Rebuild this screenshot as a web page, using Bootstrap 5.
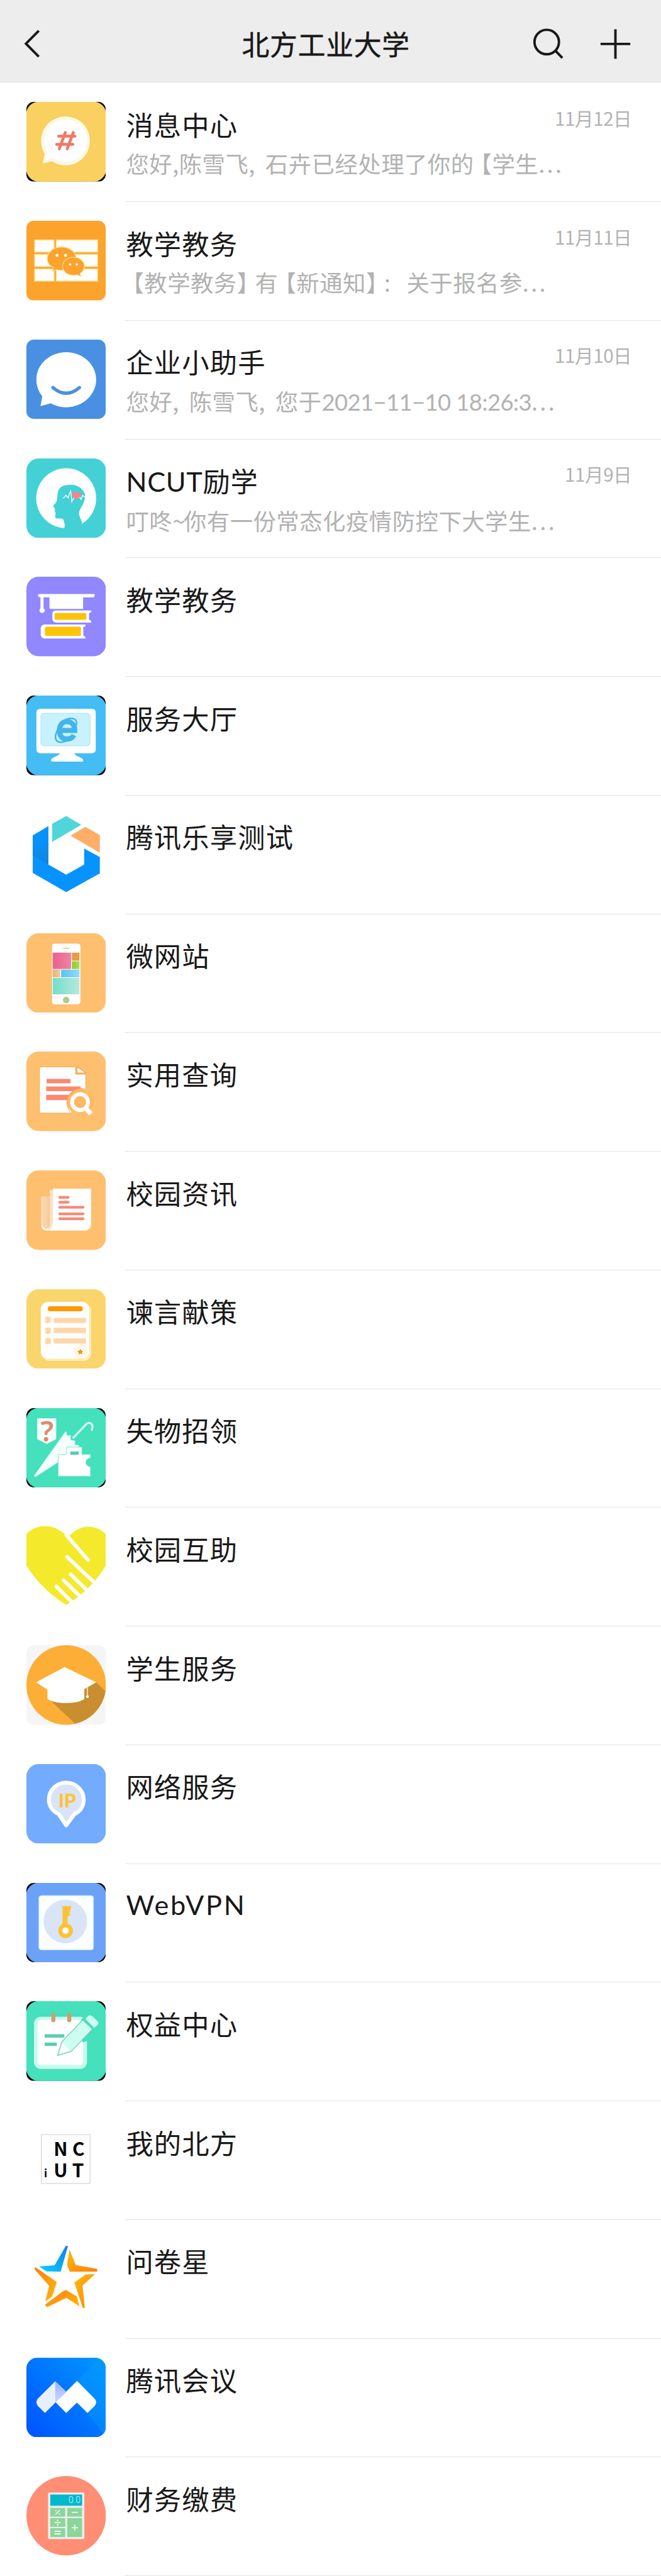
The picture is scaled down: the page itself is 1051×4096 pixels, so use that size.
<!DOCTYPE html>
<html lang="zh-CN">
<head>
<meta charset="utf-8">
<meta name="viewport" content="width=device-width, initial-scale=1">
<title>北方工业大学</title>
<link rel="stylesheet" href="https://cdn.jsdelivr.net/npm/bootstrap@5.3.0/dist/css/bootstrap.min.css">
<style>
:root{--u:.973px}
html,body{overflow:hidden}
body{font-family:"Noto Sans CJK SC","Noto Sans",sans-serif;background:#fff;color:#191919}
.topbar{height:calc(136*var(--u));background:#ededed;padding:calc(7*var(--u)) calc(47*var(--u)) 0 calc(34*var(--u))}
.topbar-side{flex:1 1 0}
.topbar-title{font-size:calc(45*var(--u));letter-spacing:calc(.8*var(--u));line-height:1;-webkit-text-stroke:.5px #191919;margin-right:calc(12*var(--u));position:relative;left:calc(5*var(--u))}
.ico{display:block;flex:none;width:calc(56*var(--u));height:calc(56*var(--u));fill:none;stroke:#191919;stroke-width:4}
.ico-find{margin-right:calc(54*var(--u))}
.entry{height:calc(194*var(--u));padding-left:calc(43*var(--u))}
.tile{display:block;flex:none;width:calc(130*var(--u));height:calc(130*var(--u));margin-top:calc(31*var(--u));margin-right:calc(32*var(--u));border-radius:calc(12*var(--u));overflow:hidden}
.entry-body{border-bottom:1px solid #e3e3e3;padding:calc(33.500*var(--u)) calc(48*var(--u)) 0 calc(1*var(--u))}
.entry-name{font-size:calc(44.5*var(--u));letter-spacing:calc(1.2*var(--u));line-height:calc(66*var(--u))}
.latin{font-family:Lato,"Noto Sans CJK SC",sans-serif}
.name-wide{letter-spacing:calc(2.800*var(--u))}
.name-tight{letter-spacing:calc(.700*var(--u))}
.stamp{letter-spacing:calc(-.600*var(--u))}
.gap-s{margin-right:.2em}.gap-l{margin-right:.45em}
.tilde{margin-right:-.08em}
.entry-date{font-size:calc(30.500*var(--u));line-height:calc(44*var(--u));margin-top:calc(2*var(--u));color:#b2b2b2;letter-spacing:calc(-.500*var(--u))}
.entry-note{font-size:calc(37.4*var(--u));line-height:calc(56*var(--u));margin-top:calc(3*var(--u));color:#b2b2b2;letter-spacing:calc(.5*var(--u));white-space:pre}
.br-l{margin-left:-.22em}.br-r{margin-right:-.22em}
.dots{letter-spacing:.09em}
</style>
<script src="https://cdn.jsdelivr.net/npm/bootstrap@5.3.0/dist/js/bootstrap.bundle.min.js"></script>
</head>
<body>
<header class="topbar d-flex align-items-center">
  <div class="topbar-side">
    <svg class="ico" viewBox="34 43 56 56"><path d="M63.5 50 42.5 71.2 63.5 92.5"/></svg>
  </div>
  <div class="topbar-title">北方工业大学</div>
  <div class="topbar-side d-flex justify-content-end">
    <svg class="ico ico-find" viewBox="867 43 56 56"><circle cx="893" cy="68.5" r="20"/><path d="M907 82.5 918.5 94.5"/></svg>
    <svg class="ico" viewBox="977 43 56 56"><path d="M981 71.7h48.6M1005.3 47.5v48.4"/></svg>
  </div>
</header>
<main>
  <div class="entry d-flex">
    <svg class="tile" viewBox="69 81 390 390"><path fill="#000" d="M69 81h390v390H69z"/><rect x="68" y="80" width="392" height="392" rx="62" fill="#fad160"/>
      <path d="M261 151c68 0 121 54 121 121s-54 122-121 122c-26 0-47-8-66-20l-49 12 11-50c-12-20-18-40-18-64 0-67 54-121 122-121z" fill="#fffbe0" stroke="#e9b94a" stroke-width="2"/>
      <path d="M262 165c60 0 107 48 107 107s-47 107-107 107c-24 0-45-8-62-20l-40 12 9-42c-9-17-14-36-14-57 0-59 47-107 107-107z" fill="#fff" stroke="#f7edc8" stroke-width="2"/>
      <path d="M260 231l-30 80M299 231l-30 80M227 249h80M217 289h80" stroke="#f27865" stroke-width="14" stroke-linecap="round"/></svg>
    <div class="entry-body flex-grow-1">
      <div class="d-flex justify-content-between"><div class="entry-name">消息中心</div><div class="entry-date">11月12日</div></div>
      <div class="entry-note">您好,陈雪飞<span class="gap-s">,</span> 石卉已经处理了你的<span class="br-l">【</span>学生<span class="dots">...</span></div>
    </div>
  </div>
  <div class="entry d-flex">
    <svg class="tile" viewBox="69 663 390 390"><path fill="#fba32d" d="M69 663h390v390H69z"/>
      <path fill="#fff" stroke="#ffdc84" stroke-width="4" d="M109 757h96v60h-96zM215 757h203v60H215zM109 828h96v60h-96zM215 828h203v60H215zM109 899h96v60h-96zM215 899h203v60H215z"/>
      <path fill="#fba32d" stroke="#ffd98a" stroke-width="4" d="M242 792c40 0 71 26 71 57s-31 57-71 57c-9 0-17-1-25-4l-20 10 5-18c-19-10-31-26-31-45 0-31 31-57 71-57z"/>
      <path fill="#fba32d" stroke="#ffd98a" stroke-width="4" d="M300 842c31 0 53 20 53 44 0 14-8 27-21 35l3 14-17-7c-6 2-12 2-18 2-30 0-54-20-54-44s24-44 54-44z"/>
      <g fill="#fff"><circle cx="219" cy="833" r="7"/><circle cx="261" cy="833" r="7"/><circle cx="283" cy="877" r="6"/><circle cx="316" cy="877" r="6"/></g></svg>
    <div class="entry-body flex-grow-1">
      <div class="d-flex justify-content-between"><div class="entry-name">教学教务</div><div class="entry-date">11月11日</div></div>
      <div class="entry-note"><span class="br-l">【</span>教学教务<span class="br-r">】</span>有<span class="br-l">【</span>新通知<span class="br-r">】</span><span class="gap-l">:</span> 关于报名参<span class="dots">...</span></div>
    </div>
  </div>
  <div class="entry d-flex">
    <svg class="tile" viewBox="69 75 390 390"><path fill="#4a90e2" d="M69 75h390v390H69z"/>
      <path fill="#fff" d="M264 137c81 0 147 60 147 134s-66 136-147 136c-27 0-53-8-75-20l-51 14 9-48c-18-22-29-50-29-82 0-74 65-134 146-134z"/>
      <path d="M199 310q65 56 130 0" fill="none" stroke="#4a90e2" stroke-width="16" stroke-linecap="round"/></svg>
    <div class="entry-body flex-grow-1">
      <div class="d-flex justify-content-between"><div class="entry-name">企业小助手</div><div class="entry-date">11月10日</div></div>
      <div class="entry-note">您好<span class="gap-s">,</span> 陈雪飞<span class="gap-s">,</span> 您于<span class="latin stamp">2021−11−10 18:26:3</span><span class="dots">...</span></div>
    </div>
  </div>
  <div class="entry d-flex">
    <svg class="tile" viewBox="69 657 390 390"><rect x="69" y="657" width="390" height="390" rx="60" fill="#43d1d6"/>
      <circle cx="264" cy="852" r="147" fill="#fff"/>
      <path fill="#43d1d6" d="M221 838c2-28 14-44 36-49 52-12 84 8 98 40 8 40-21 66-28 92-1 7 0 13 3 20l13 33-42 40-48-10c7-14 3-34-5-50-9-5-28 1-36-6-5-8 1-18 0-26-6-4-3-7-3-13l-2-11c-8-2-9-7-2-14 9-10 14-18 14-28 0-6 1-12 2-18z"/>
      <path d="M250 852l13-15 10 14 13-38 5 56 11-20 28-3 7 12 8-20 12 10" fill="none" stroke="#fff" stroke-width="4"/>
      <path fill="#fb8287" d="M295 823h15l5 5 5-5h16v18l-22 19-21-19z"/></svg>
    <div class="entry-body flex-grow-1">
      <div class="d-flex justify-content-between"><div class="entry-name name-tight"><span class="latin">NCUT</span>励学</div><div class="entry-date">11月9日</div></div>
      <div class="entry-note">叮咚<span class="tilde">~</span>你有一份常态化疫情防控下大学生<span class="dots">...</span></div>
    </div>
  </div>
  <div class="entry d-flex">
    <svg class="tile" viewBox="69 69 390 390"><rect x="69" y="69" width="390" height="390" rx="60" fill="#9187ff"/>
      <g fill="#fff"><path d="M132 154h271v8c0 5-3 8-8 8h-48v57H191c-6 0-9-3-9-8v-49h-29v54c4 3 6 7 6 11 0 7-6 12-13 12s-13-5-13-12c0-4 2-8 5-11v-54c-8-1-12-4-12-8s2-8 5-8z"/>
      <path d="M214 235h173c1 8-3 12-11 12v34c8 0 12 6 11 13H218c-16 0-22-9-22-22v-18c0-12 6-19 18-19z"/><path d="M160 303h199c1 8-3 12-11 12v44c8 0 12 5 11 13H162c-15 0-23-9-23-22v-26c0-13 8-21 21-21z"/></g>
      <g fill="#fdc305"><rect x="207" y="247" width="156" height="33" rx="5"/><rect x="160" y="314" width="176" height="45" rx="5"/></g></svg>
    <div class="entry-body flex-grow-1"><div class="entry-name">教学教务</div></div>
  </div>
  <div class="entry d-flex">
    <svg class="tile" viewBox="69 651 390 390"><path d="M69 651h390v390H69z"/><rect x="68" y="650" width="392" height="392" rx="62" fill="#43bdf3"/>
      <path fill="#fff" d="M139 716h250q20 0 20 20v178q0 20-20 20h-86c8 17 38 18 44 32 2 6-1 9-7 9H198c-7 0-10-4-8-10 7-13 36-16 43-31h-94q-21 0-21-20V736q0-20 21-20z"/>
      <rect x="140" y="738" width="241" height="159" rx="14" fill="#c8f2fe" stroke="#a5dff2" stroke-width="3"/>
      <path fill="none" stroke="#43b5ea" stroke-width="25" d="M234 822h72c0-28-15-43-38-43-22 0-37 16-37 43 0 28 14 42 37 42 17 0 28-7 34-19"/>
      <path fill="none" stroke="#43b5ea" stroke-width="8" d="M232 790c28-30 68-34 80-17 4 8 3 18 0 27M226 812c-16 28-18 51-7 62 12 10 36 6 56-5"/></svg>
    <div class="entry-body flex-grow-1"><div class="entry-name">服务大厅</div></div>
  </div>
  <div class="entry d-flex">
    <svg class="tile" viewBox="69 93 390 390"><defs><linearGradient id="fold" x1="0" y1="0" x2="0" y2="1"><stop offset=".35" stop-color="#0693ff"/><stop offset="1" stop-color="#1284dc"/></linearGradient></defs>
      <path fill="#0693ff" d="M100 196l77-45v188l87 49 88-49v-79l77 42v80l-165 92-164-94z"/><path fill="url(#fold)" d="M100 196l77-45v187l-77-43z"/>
      <path fill="#50d5da" d="M195 139l69-38 74 43-143 84z"/><path fill="#ffae67" d="M285 197l73-43 71 40v87z"/></svg>
    <div class="entry-body flex-grow-1"><div class="entry-name">腾讯乐享测试</div></div>
  </div>
  <div class="entry d-flex">
    <svg class="tile" viewBox="69 675 390 390"><defs><linearGradient id="pk"><stop stop-color="#ec608b"/><stop offset="1" stop-color="#ef84a5"/></linearGradient><linearGradient id="mt"><stop stop-color="#71dfc9"/><stop offset="1" stop-color="#b9e6dc"/></linearGradient><linearGradient id="sk"><stop stop-color="#5ac4ec"/><stop offset="1" stop-color="#8fdefb"/></linearGradient><linearGradient id="gn"><stop stop-color="#8fcd27"/><stop offset="1" stop-color="#a9dc57"/></linearGradient><linearGradient id="tn"><stop stop-color="#e5b471"/><stop offset="1" stop-color="#f5cd9b"/></linearGradient></defs>
      <rect x="69" y="675" width="390" height="390" rx="60" fill="#fec06f"/><rect x="193" y="724" width="142" height="301" rx="15" fill="#fff" stroke="#f0ad5c" stroke-width="2"/>
      <path fill="url(#pk)" d="M198 770h90v80h-90z"/><path fill="#e99c45" d="M292 770h37v39h-37z"/><path fill="url(#gn)" d="M292 812h37v38h-37z"/><path fill="url(#tn)" d="M198 853h37v38h-37z"/><path fill="url(#sk)" d="M239 853h90v38h-90z"/><path fill="url(#mt)" d="M198 894h131v80H198z"/>
      <circle cx="264" cy="1002" r="16" fill="#b4c88a"/><rect x="248" y="746" width="32" height="6" rx="3" fill="#f2d09b"/><circle cx="263" cy="738" r="4" fill="#f7ddb6"/></svg>
    <div class="entry-body flex-grow-1"><div class="entry-name">微网站</div></div>
  </div>
  <div class="entry d-flex">
    <svg class="tile" viewBox="69 87 390 390"><rect x="69" y="87" width="390" height="390" rx="60" fill="#fec06f"/>
      <path fill="#fff" stroke="#efa54f" stroke-width="3" d="M133 162h177v36h50v191H133z"/><path fill="#fff" stroke="#efa54f" stroke-width="4" d="M317 162v30h44z"/>
      <g fill="#fb8871"><rect x="168" y="221" width="117" height="22" rx="3"/><rect x="166" y="258" width="169" height="23" rx="3"/><rect x="166" y="299" width="120" height="26" rx="3"/></g>
      <circle cx="332" cy="333" r="64" fill="#fdb965"/><path d="M362 272h12v120h-90z" fill="#fec06f"/><path d="M285 388c-21-32-24-65-1-94 21-24 51-30 76-23" fill="none" stroke="#efa54f" stroke-width="3"/>
      <circle cx="332" cy="335" r="39" fill="#fdb965" stroke="#fff" stroke-width="19"/><path d="M359 364l26 28" stroke="#fff" stroke-width="23"/></svg>
    <div class="entry-body flex-grow-1"><div class="entry-name">实用查询</div></div>
  </div>
  <div class="entry d-flex">
    <svg class="tile" viewBox="69 669 390 390"><defs><linearGradient id="roll"><stop stop-color="#fbdcba"/><stop offset="1" stop-color="#f6ca98"/></linearGradient></defs><rect x="69" y="669" width="390" height="390" rx="60" fill="#fec06f"/>
      <path fill="#fff" stroke="#f3b469" stroke-width="1.500" d="M198 758h189v174c0 20-15 33-33 33H172c-18 0-31-12-31-30l57-4z"/><path fill="#fbe3c9" d="M184 765h14v160c0 22-11 36-26 36h-4c12-8 16-20 16-36z"/><path fill="url(#roll)" d="M141 796h43v136c0 30-33 29-39 4l-4-8z"/>
      <path d="M232 801h42M232 825h42M232 850h115M232 882h115M232 906h115" stroke="#fb8871" stroke-width="13" stroke-linecap="round"/></svg>
    <div class="entry-body flex-grow-1"><div class="entry-name">校园资讯</div></div>
  </div>
  <div class="entry d-flex">
    <svg class="tile" viewBox="69 81 390 390"><rect x="69" y="81" width="390" height="390" rx="60" fill="#fad56b"/>
      <rect x="146" y="150" width="240" height="282" rx="36" fill="#fff0c6"/><rect x="138" y="142" width="241" height="282" rx="36" fill="#fff" stroke="#f4c454" stroke-width="1.500"/>
      <rect x="174" y="164" width="171" height="25" rx="12" fill="#fd9a02"/><path fill="#ffd6a7" d="M162 216h26v30h-26zM162 269h26v30h-26zM162 320h26v30h-26zM203 222h158v24H203zM203 270h158v26H203zM203 322h158v25H203z"/>
      <g fill="none" stroke="#ffe2bd" stroke-width="3"><circle cx="333" cy="387" r="33"/><circle cx="333" cy="387" r="23"/></g><path fill="#f7970a" d="M334 373l4 9 9 1-6 8 3 9-10-4-9 6v-11l-7-7 10-2z"/></svg>
    <div class="entry-body flex-grow-1"><div class="entry-name">谏言献策</div></div>
  </div>
  <div class="entry d-flex">
    <svg class="tile" viewBox="69 663 390 390"><path d="M69 663h390v390H69z"/><rect x="68" y="662" width="392" height="392" rx="62" fill="#45e0bc"/>
      <path fill="#f4fffb" d="M122 713h93v102l-46 24-47-24z"/><text x="170" y="825" text-anchor="middle" font-family="Noto Sans" font-weight="600" font-size="138" fill="#df8a6c">?</text>
      <path fill="none" stroke="#d9fff2" stroke-width="10" stroke-linecap="round" d="M299 808l58-61c18-23 43-10 33 23"/>
      <path fill="#f4fffb" stroke="#c8fff0" stroke-width="3" d="M262 777l7 23 16-4v24l22 4-2 18 22 5-14 30-91 52-108 70-7-4z"/>
      <path fill="#fff" stroke="#7de5cc" stroke-width="3" d="M225 890h41v-36h75v36h42v17c-30 4-30 38 0 45v45H225z"/><path fill="#5fcab3" d="M284 876h42v16h-42z"/></svg>
    <div class="entry-body flex-grow-1"><div class="entry-name">失物招领</div></div>
  </div>
  <div class="entry d-flex">
    <svg class="tile rounded-0" viewBox="69 75 390 390"><path fill="#f4e92b" d="M69 113c49-52 123-48 169-14 16 10 26 19 37 26 56-58 124-66 184-12v152c-44 76-112 146-194 195C200 421 124 356 69 267z"/>
      <path d="M265 118l106 122M268 224l144 136M286 310l88 86M252 340l88 86M216 370l84 84" stroke="#fff" stroke-width="18" stroke-linecap="round"/></svg>
    <div class="entry-body flex-grow-1"><div class="entry-name">校园互助</div></div>
  </div>
  <div class="entry d-flex">
    <svg class="tile" viewBox="69 657 390 390"><path fill="#f5f5f5" d="M69 657h390v390H69z"/><circle cx="264" cy="852" r="195" fill="#fcae37"/>
      <path fill="#c88e2f" d="M411 839l46 43a195 195 0 0 1-149 160L190 931z"/>
      <path fill="#fff" d="M256 764l155 75-58 33v48c-27 27-154 28-181-2v-44l-56-35z"/><path d="M368 864v42" stroke="#fff" stroke-width="4"/><circle cx="368" cy="909" r="7" fill="#fff"/></svg>
    <div class="entry-body flex-grow-1"><div class="entry-name">学生服务</div></div>
  </div>
  <div class="entry d-flex">
    <svg class="tile" viewBox="69 69 390 390"><rect x="69" y="69" width="390" height="390" rx="60" fill="#73abff"/>
      <path fill="#d9e4f6" stroke="#fff" stroke-width="19" stroke-linejoin="round" d="M264 160c48 0 86 37 86 83 0 32-17 58-45 71l-41 55-37-55c-29-13-48-39-48-71 0-46 37-83 85-83z"/>
      <text x="269" y="283" text-anchor="middle" font-family="Lato" font-weight="900" font-size="92" fill="#fdc235">IP</text></svg>
    <div class="entry-body flex-grow-1"><div class="entry-name">网络服务</div></div>
  </div>
  <div class="entry d-flex">
    <svg class="tile" viewBox="69 651 390 390"><path d="M69 651h390v390H69z"/><rect x="68" y="650" width="392" height="392" rx="62" fill="#6ba2f8"/>
      <rect x="130" y="713" width="268" height="266" rx="12" fill="#fcfeff" stroke="#b9e2ff" stroke-width="3"/><circle cx="260" cy="840" r="107" fill="#d9e4f6"/>
      <path fill="#fdc235" d="M246 764h42v12l-5 8 3 11h-8v6h5v11h-12v48h-25z"/><circle cx="261" cy="885" r="26" fill="#fff" stroke="#fdc235" stroke-width="20"/></svg>
    <div class="entry-body flex-grow-1"><div class="entry-name latin name-wide">WebVPN</div></div>
  </div>
  <div class="entry d-flex">
    <svg class="tile" viewBox="69 63 390 390"><path d="M69 63h390v390H69z"/><rect x="68" y="62" width="392" height="392" rx="62" fill="#45e0bc"/>
      <rect x="106" y="139" width="260" height="256" rx="34" fill="#c5fdeb"/><rect x="124" y="155" width="222" height="220" rx="15" fill="#fff"/>
      <path stroke="#5fcdb2" stroke-width="17" d="M158 233h97M158 274h60"/><path stroke="#d69a75" stroke-width="20" stroke-linecap="round" d="M201 130v26M279 130v26"/>
      <path fill="#45e0bc" d="M346 139l24 20v98l-26 8-10-100z"/>
      <path fill="#cdfdf0" stroke="#70cdb7" stroke-width="4" stroke-linejoin="round" d="M345 155l48 45-105 110-67 19 22-67z"/><path fill="#fff" d="M245 268l39 38-55 16z"/>
      <path fill="#cdfdf0" d="M358 150l15-15q10-7 21 3l24 24q8 9-1 18l-15 14z"/></svg>
    <div class="entry-body flex-grow-1"><div class="entry-name">权益中心</div></div>
  </div>
  <div class="entry d-flex">
    <svg class="tile" viewBox="69 645 390 390"><path fill="#fefefe" stroke="#ccc" stroke-width="3" d="M142 716h239v240H142z"/>
      <g font-family="Noto Sans CJK SC" font-weight="700" font-size="92" text-anchor="middle"><text x="237" y="822">N</text><text x="324" y="822">C</text><text x="237" y="925">U</text><text x="322" y="925">T</text><text x="163" y="926" font-size="52">i</text></g></svg>
    <div class="entry-body flex-grow-1"><div class="entry-name">我的北方</div></div>
  </div>
  <div class="entry d-flex">
    <svg class="tile" viewBox="69 52 390 357.6" preserveAspectRatio="none"><defs><linearGradient id="bl" x1="0" y1="1" x2="1" y2="0"><stop stop-color="#0fd0ff"/><stop offset="1" stop-color="#0a7ff0"/></linearGradient><linearGradient id="og" x1="0" y1="0" x2="1" y2="1"><stop stop-color="#ffbd0c"/><stop offset="1" stop-color="#ff7d0c"/></linearGradient><linearGradient id="oh" x1="0" y1="0" x2="1" y2="1"><stop stop-color="#ff7d0c"/><stop offset="1" stop-color="#ffb90c"/></linearGradient></defs>
      <path fill="url(#bl)" d="M262 84l11-1-36 116-70-1-36-22 76-5z"/><path fill="url(#og)" d="M280 99l31 70 105 18v12l-134 1-14-31z"/>
      <path fill="url(#oh)" d="M111 178l107 68-23 65-34 23 20-71-71-73z"/><path fill="url(#og)" d="M304 248l55-36 46-2-61 52 11 99-9 3z"/><path fill="url(#oh)" d="M160 348l87-60 15-6 54 28 13 45-64-38-94 42z"/></svg>
    <div class="entry-body flex-grow-1"><div class="entry-name">问卷星</div></div>
  </div>
  <div class="entry d-flex">
    <svg class="tile" viewBox="69 586 390 357" preserveAspectRatio="none"><defs><linearGradient id="mg" x1="0" y1="1" x2="1" y2="0"><stop stop-color="#0052ff"/><stop offset="1" stop-color="#0098ff"/></linearGradient><linearGradient id="fd" x1="0" y1="0" x2="0" y2="1"><stop stop-color="#9db1ff"/><stop offset="1" stop-color="#cbd9ff"/></linearGradient></defs>
      <rect x="69" y="586" width="390" height="357" rx="52" ry="48" fill="url(#mg)"/><path fill="#08a4ff" opacity=".35" d="M424 594q35 12 35 40v309l-90-109-53-143z"/>
      <path fill="#e8f0ff" d="M211 691v96l-51 47-36-33q-12-15 0-31z"/><path fill="url(#fd)" d="M211 691l53 47-53 49z"/><path fill="#fff" d="M317 690l87 80q14 16 0 32l-36 32-51-47-53 47-52-48z"/></svg>
    <div class="entry-body flex-grow-1"><div class="entry-name">腾讯会议</div></div>
  </div>
  <div class="entry d-flex">
    <svg class="tile rounded-0" viewBox="69 1119.600 390 357.600" preserveAspectRatio="none"><ellipse cx="264" cy="1298" rx="195" ry="178.500" fill="#ff8e74"/>
      <rect x="175" y="1194" width="178" height="209" rx="4" fill="#ededed"/><path fill="#00b8cb" d="M186 1203h156v50H186z"/><path fill="#8bd69a" d="M186 1263h73v39h-73zM269 1263h73v39h-73zM186 1309h73v39h-73zM186 1354h73v40h-73zM269 1309h73v85h-73z"/>
      <text x="334" y="1242" text-anchor="end" font-family="Roboto" font-weight="300" font-size="40" fill="#d8fbff" textLength="58" lengthAdjust="spacingAndGlyphs">0.0</text>
      <path fill="none" stroke="#fff" stroke-width="4.500" d="M211 1292l22-19M210 1275h7M227 1290h7M291 1283h30M207 1329h30M207 1368h30M207 1380h30M291 1352h30M306 1338v28"/><circle cx="222" cy="1319" r="3.500" fill="#fff"/><circle cx="222" cy="1339" r="3.500" fill="#fff"/></svg>
    <div class="entry-body flex-grow-1"><div class="entry-name">财务缴费</div></div>
  </div>
</main>
</body>
</html>
